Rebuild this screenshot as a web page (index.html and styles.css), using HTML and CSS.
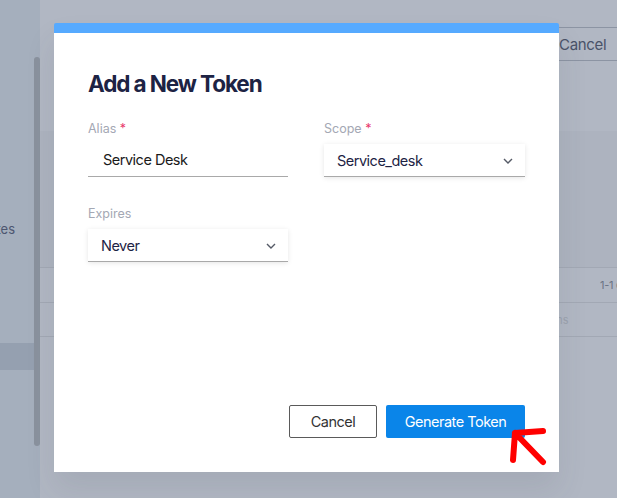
FILE: index.html
```html
<!DOCTYPE html>
<html>
<head>
<meta charset="utf-8">
<link rel="stylesheet" href="styles.css">
</head>
<body>
<div class="page">
  <aside class="sidebar">
    <div class="side-content">
      <div class="side-item"><span>Templates</span></div>
      <div class="side-row active"></div>
    </div>
    <div class="scroll-track"><div class="scroll-thumb"></div></div>
  </aside>
  <main class="main">
    <div class="topbar">
      <button class="bg-btn">Cancel</button>
    </div>
    <div class="panel"></div>
    <div class="table">
      <div class="trow"><span class="pager">1-1 of 1</span></div>
      <div class="trow"><span class="muted">Items</span></div>
    </div>
  </main>
</div>

<div class="modal">
  <h1 class="title">Add a New Token</h1>
  <div class="form">
    <div class="field">
      <label class="label">Alias <span class="req">*</span></label>
      <div class="input">Service Desk</div>
    </div>
    <div class="field">
      <label class="label">Scope <span class="req">*</span></label>
      <div class="select">
        <span>Service_desk</span>
        <svg class="chev" width="10" height="6" viewBox="0 0 10 6"><path d="M1 1l4 4 4-4" fill="none" stroke="#555a66" stroke-width="1.4"/></svg>
      </div>
    </div>
    <div class="field expires">
      <label class="label">Expires</label>
      <div class="select">
        <span>Never</span>
        <svg class="chev" width="10" height="6" viewBox="0 0 10 6"><path d="M1 1l4 4 4-4" fill="none" stroke="#555a66" stroke-width="1.4"/></svg>
      </div>
    </div>
  </div>
  <div class="actions">
    <button class="btn btn-cancel">Cancel</button>
    <button class="btn btn-primary">Generate Token</button>
  </div>
  <svg class="arrow" width="50" height="50" viewBox="0 0 50 50">
    <path d="M5 6 L33 35 M5 6 L3 33 M5 6 L33 4" fill="none" stroke="#ff0000" stroke-width="6" stroke-linecap="round" stroke-linejoin="round"/>
  </svg>
</div>
</body>
</html>
```

FILE: styles.css
```css
* { box-sizing: border-box; }
html, body { margin: 0; padding: 0; }
body {
  width: 617px;
  height: 498px;
  overflow: hidden;
  font-family: "Inter", "Liberation Sans", sans-serif;
  background: #b1b7c3;
  position: relative;
}
.page {
  display: flex;
  width: 617px;
  height: 498px;
}
.sidebar {
  width: 40px;
  flex: none;
  display: flex;
  background: #a5afbd;
}
.side-content {
  width: 34px;
  overflow: hidden;
  padding-top: 220px;
}
.side-item {
  display: flex;
  justify-content: flex-end;
  overflow: hidden;
  white-space: nowrap;
  padding-right: 19px;
  font-size: 13px;
  line-height: 18px;
  color: #4d5670;
}
.side-row {
  height: 27px;
  margin-top: 105px;
  width: 34px;
}
.side-row.active { background: #95a0b0; }
.scroll-track {
  width: 6px;
  padding-top: 57px;
}
.scroll-thumb {
  width: 6px;
  height: 389px;
  border-radius: 3px;
  background: #8a929e;
}
.main {
  flex: 1;
  background: #b1b7c3;
  display: flex;
  flex-direction: column;
}
.topbar {
  margin-top: 27px;
  display: flex;
  justify-content: flex-end;
}
.bg-btn {
  height: 34px;
  width: 90px;
  margin-right: -20px;
  padding: 0 0 0 11px;
  text-align: left;
  background: transparent;
  border: 1px solid #8c94a3;
  border-right: none;
  font-family: "Inter", "Liberation Sans", sans-serif;
  font-size: 15px;
  letter-spacing: -0.3px;
  color: #4a5268;
}
.panel {
  margin-top: 70px;
  height: 136px;
  background: #adb3bf;
}
.table {
  display: flex;
  flex-direction: column;
}
.trow {
  height: 35px;
  border-top: 1px solid #a2a8b4;
  display: flex;
  align-items: center;
  justify-content: flex-end;
  font-size: 11px;
  color: #6b7384;
  white-space: nowrap;
  overflow: hidden;
}
.trow:last-child { border-bottom: 1px solid #a2a8b4; height: 35px; justify-content: flex-start; padding-left: 500px; }
.pager { margin-right: -16px; letter-spacing: -0.3px; }
.muted { color: #9ba2ae; }

.modal {
  position: absolute;
  left: 54px;
  top: 23px;
  width: 505px;
  height: 449px;
  background: #ffffff;
  border-top: 10px solid #56aaff;
  border-radius: 2px 2px 0 0;
  padding: 37px 34px 34px 34px;
  display: flex;
  flex-direction: column;
  box-shadow: 0 18px 30px rgba(60, 66, 80, 0.10);
}
.title {
  margin: 0;
  font-size: 22.5px;
  line-height: 28px;
  font-weight: 700;
  color: #1d2344;
  letter-spacing: -1.1px;
}
.form {
  margin-top: 23px;
  display: grid;
  grid-template-columns: 200px 201px;
  column-gap: 36px;
  row-gap: 29px;
}
.field { display: flex; flex-direction: column; }
.label {
  font-size: 12.5px;
  line-height: 16px;
  color: #a4a8b4;
  margin-bottom: 7px;
}
.req { color: #e8396a; }
.input {
  height: 33px;
  border-bottom: 1px solid #a9a9a9;
  padding-left: 15px;
  font-size: 14.5px;
  line-height: 31px;
  color: #1a1a1a;
  letter-spacing: -0.5px;
}
.select {
  height: 33px;
  border-bottom: 1px solid #a9a9a9;
  box-shadow: 0 1px 5px rgba(0, 0, 0, 0.10);
  display: flex;
  align-items: center;
  justify-content: space-between;
  padding: 0 12px 0 13px;
  font-size: 14.5px;
  color: #1d2344;
  letter-spacing: -0.5px;
}
.chev { margin-top: 1px; }
.actions {
  margin-top: auto;
  display: flex;
  justify-content: flex-end;
  gap: 9px;
}
.btn {
  height: 33px;
  font-family: "Inter", "Liberation Sans", sans-serif;
  font-size: 14.5px;
  border-radius: 2px;
  letter-spacing: -0.5px;
}
.btn-cancel {
  width: 88px;
  background: #ffffff;
  border: 1px solid #5a5a5a;
  color: #333333;
}
.btn-primary {
  width: 139px;
  background: #0a85e9;
  border: none;
  color: #ffffff;
}
.arrow {
  position: absolute;
  left: 456px;
  top: 394px;
}
```
